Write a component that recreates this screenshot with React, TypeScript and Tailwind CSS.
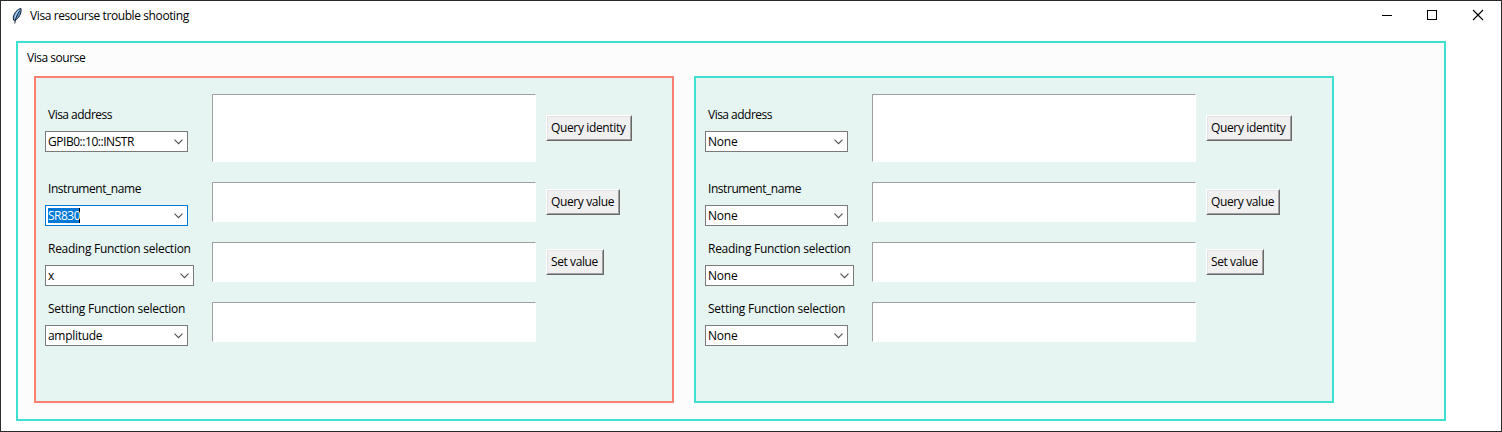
import React from "react";

type Item = { text: string; track: string };
type Row = {
  label: Item;
  value: Item;
  comboWidth: string;
  height: string;
  boxHeight: string;
  button?: Item & { width: string };
  selected?: boolean;
};

const none: Item = { text: "None", track: "tracking-[-0.2px]" };

const baseRows: Row[] = [
  {
    label: { text: "Visa address", track: "tracking-[-0.52px]" },
    value: none,
    comboWidth: "w-[143px]",
    height: "h-[68px] mb-[10px]",
    boxHeight: "h-[68px]",
    button: { text: "Query identity", track: "tracking-[-0.36px]", width: "w-[86px]" },
  },
  {
    label: { text: "Instrument_name", track: "tracking-[-0.44px]" },
    value: none,
    comboWidth: "w-[143px]",
    height: "h-[60px]",
    boxHeight: "h-10",
    button: { text: "Query value", track: "tracking-[-0.38px]", width: "w-[74px]" },
  },
  {
    label: { text: "Reading Function selection", track: "tracking-[-0.27px]" },
    value: none,
    comboWidth: "w-[149px]",
    height: "h-[60px]",
    boxHeight: "h-10",
    button: { text: "Set value", track: "tracking-[-0.4px]", width: "w-[58px]" },
  },
  {
    label: { text: "Setting Function selection", track: "tracking-[-0.24px]" },
    value: none,
    comboWidth: "w-[143px]",
    height: "h-[60px]",
    boxHeight: "h-10",
  },
];

const leftValues: Item[] = [
  { text: "GPIB0::10::INSTR", track: "tracking-[-0.46px]" },
  { text: "SR830", track: "tracking-[-0.5px]" },
  { text: "x", track: "tracking-[-0.2px]" },
  { text: "amplitude", track: "tracking-[-0.3px]" },
];

const leftRows: Row[] = baseRows.map((row, i) => ({ ...row, value: leftValues[i], selected: i === 1 }));

function Combo({ row }: { row: Row }) {
  return (
    <div
      className={`flex h-[21px] items-center justify-between border bg-white pl-0.5 pr-1 ${row.comboWidth} ${
        row.selected ? "border-[#0078d7]" : "border-[#7a7a7a]"
      }`}
    >
      <span
        className={`h-[15px] leading-[15px] ${row.value.track} ${
          row.selected ? "w-8 border-r border-black bg-[#0078d7] text-white" : ""
        }`}
      >
        {row.value.text}
      </span>
      <svg width="9" height="6" viewBox="0 0 9 6" fill="none" stroke="#505050" strokeWidth="1.1">
        <path d="M0.5 0.7 4.5 4.7 8.5 0.7" />
      </svg>
    </div>
  );
}

function Panel({ rows, border }: { rows: Row[]; border: string }) {
  return (
    <section className={`h-[327px] w-[640px] border-2 bg-[#e6f5f2] pl-[9px] pt-4 ${border}`}>
      {rows.map((row) => (
        <div key={row.label.text} className={`flex items-center ${row.height}`}>
          <div className="w-[167px]">
            <div className={`mb-1.5 h-[21px] pl-[3px] leading-[21px] ${row.label.track}`}>{row.label.text}</div>
            <Combo row={row} />
          </div>
          <div className={`mr-2.5 w-[324px] border border-b-white border-l-[#a0a0a0] border-r-white border-t-[#a0a0a0] bg-white ${row.boxHeight}`} />
          {row.button && (
            <button
              className={`h-[26px] border border-b-[#696969] border-l-white border-r-[#696969] border-t-white ${row.button.width}`}
            >
              <span
                className={`flex h-6 items-center border border-b-[#a0a0a0] border-l-[#e3e3e3] border-r-[#a0a0a0] border-t-[#e3e3e3] bg-[#f0f0f0] pl-[3px] ${row.button.track}`}
              >
                {row.button.text}
              </span>
            </button>
          )}
        </div>
      ))}
    </section>
  );
}

function Feather() {
  return (
    <svg width="10" height="17" viewBox="0 0 10 17">
      <path d="M9 0.5C5.5 1 2 5 1.3 9.2L1.5 12 2.6 12.7C6.6 10.5 9.8 5.5 9 0.5Z" fill="#5f9ad6" stroke="#17202e" strokeWidth="1" />
      <path d="M6.8 2.5C4.3 5.2 3.2 8 2.9 10.5" fill="none" stroke="#b5d5f3" strokeWidth="1.3" />
      <path d="M7.6 3C4.8 7 3.2 11 2.8 15.5" fill="none" stroke="#101820" strokeWidth="0.9" />
    </svg>
  );
}

export default function App() {
  return (
    <div className="h-[432px] w-[1502px] overflow-hidden whitespace-nowrap border border-[#2b2b2b] bg-white font-['Open_Sans','Noto_Sans',sans-serif] text-[12px] text-black">
      <header className="flex h-[30px] items-center pl-[11px]">
        <Feather />
        <h1 className="ml-2 tracking-[-0.4px]">Visa resourse trouble shooting</h1>
        <div className="ml-auto flex">
          <svg width="120" height="30" viewBox="0 0 120 30" fill="none" stroke="black">
            <path d="M1 14.5H11M46.5 9.5H55.5V18.5H46.5Z" shapeRendering="crispEdges" />
            <path d="M92 9 102 19M102 9 92 19" strokeWidth="1.1" />
          </svg>
        </div>
      </header>
      <main className="ml-[15px] mt-[10px] h-[380px] w-[1430px] border-2 border-[#40e0d0] bg-[#fcfcfc] pl-[6px] pt-[6px]">
        <h2 className="h-[17px] w-16 bg-white pl-[3px] leading-[17px] tracking-[-0.47px]">Visa sourse</h2>
        <div className="ml-[10px] mt-[10px] flex gap-5">
          <Panel rows={leftRows} border="border-[#fa8072]" />
          <Panel rows={baseRows} border="border-[#40e0d0]" />
        </div>
      </main>
    </div>
  );
}
